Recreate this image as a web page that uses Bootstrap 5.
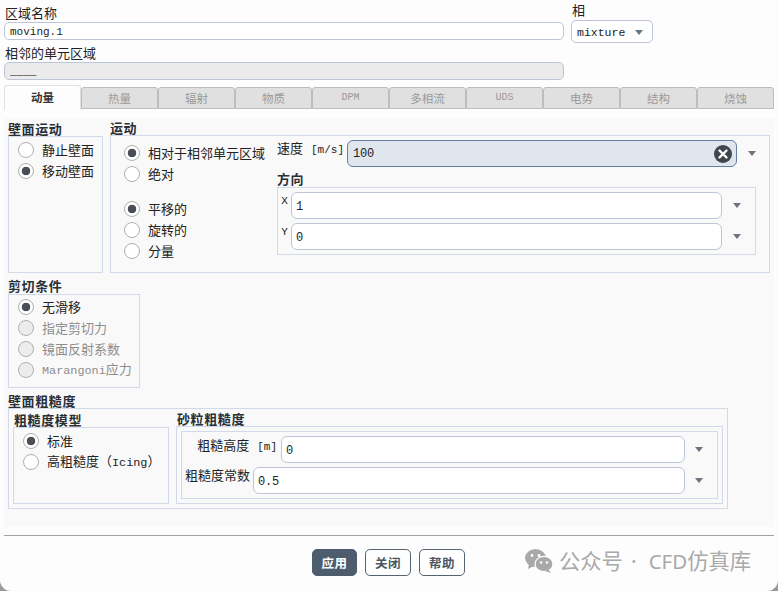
<!DOCTYPE html>
<html lang="zh"><head><meta charset="utf-8"><title>壁面</title>
<link href="https://cdn.jsdelivr.net/npm/bootstrap@5.3.0/dist/css/bootstrap.min.css" rel="stylesheet">
<style>
html{background:#9a9a9a;height:591px;overflow:hidden}
body{width:778px;height:591px;background:#fdfdfe;border-radius:0 0 11px 11px;overflow:hidden;position:relative;font:13px/15px "Noto Sans CJK SC",sans-serif;color:#222;padding:3px 4px 0}
.lt{font-family:"Liberation Mono",monospace;font-size:11.8px}
.top-l{width:560px}.top-r{width:82px;margin-left:7px}
.lbl{height:16px;line-height:13px;padding-left:1px}
.fld{display:block;width:100%;height:18px;border:1px solid #bcc6d6;border-radius:5px;background:#fff;padding:1px 5px 0;font:11px/16px "Liberation Mono",monospace;color:#222;outline:0}
.fld.off{background:#ebebeb;height:18px}
.sel{height:23px;border:1px solid #bcc6d6;border-radius:5px;background:#fff;padding:2px 9px 0 5px;font:11.5px/21px "Liberation Mono",monospace;margin-top:2px}
.tri{width:0;height:0;border:4.5px solid transparent;border-top:5px solid #6c7480;border-bottom:0;flex:none}
.tabbar{margin-top:5px;height:25px;border:0;flex-wrap:nowrap;align-items:flex-end}
.tabbar .nav-item{width:77px}
.tabbar .nav-link{height:22px;margin:0 0 1px;padding:0;text-align:center;background:#e0e0e0;border:1px solid #bdbdbd;border-radius:3px 3px 0 0;border-bottom-width:1px;color:#9a9a9a;font-size:11.5px;line-height:20px}
.tabbar .nav-link.lt{font-size:10px}
.tabbar .nav-link.active{height:25px;margin:0;background:#fdfdfe;border-bottom:0;color:#333;font-weight:700;line-height:22px}
.pane{margin-top:8px;height:409px;width:770px;background:#f9f9fa;padding:5px 4px 0}
.hd{font-weight:700;font-size:13px;line-height:11px;color:#2a2f36;letter-spacing:.6px;height:13px}
.grp{border:1px solid #d2d9e8}
.rad{display:flex;align-items:center;height:21px;gap:0}
.rad .form-check-input{width:16px;height:16px;margin:0 8px 0 0;flex:none;background-color:#fff;border:1px solid #b0b0b0;box-shadow:none;float:none}
.rad .form-check-input:checked{background-color:#fff;border-color:#b0b0b0;background-image:radial-gradient(circle,#4a4f57 0 4px,transparent 4.6px);background-size:auto}
.rad .form-check-input:disabled{background-color:#ececec;opacity:1}
.rad .form-check-input:checked:disabled{background-color:#ececec}
.rad.dim{color:#8d8d8d}
.rad .form-check-label{opacity:1!important;white-space:nowrap}
.col-wm{width:95px;height:137px;padding:2px 0 0 9px}.mot-box{width:660px;height:138px}
.mot-l{width:166px;padding:6px 0 0 13px;flex:none}
.mot-r{width:493px;flex:none}
.spd{margin-top:4px;height:27px;width:489px}
.spd-lbl{width:70px;flex:none;line-height:14px;margin-top:1px;white-space:nowrap}
.unit{margin-left:8px;font-size:11px}
.f-tall{height:27px;line-height:25px;border-radius:6px;padding:2px 8px 0 4px;flex:1 1 0;min-width:0;font-size:12px;letter-spacing:-.2px}
.f-act{background:#dfe6ee;border-color:#64809e;padding:0 4px 0 5px;display:flex;align-items:center;justify-content:space-between}
.f-act>span{padding-top:2px}
.clr{width:18px;height:18px;flex:none;display:block}
.trislot{width:30px;display:flex;justify-content:center;flex:none}
.spd .trislot{width:29px}
.trislot.nar{width:28px}
.dirbox{width:479px;height:68px;padding:4px 0 0 0}
.dirrow{height:27px}.dirrow+.dirrow{margin-top:4px}
.sp3{width:3px}
.axis{width:13px;text-align:center;flex:none;font:11px/14px "Liberation Mono",monospace;align-self:flex-start;margin-top:2px}
.shearbox{width:132px;height:94px;padding:1px 0 0 9px}
.roughbox{width:720px;height:101px;padding:5px 0 0 4px;gap:7px}
.rmodel{height:77px;padding:2px 0 0 9px}
.rgrit{height:78px}
.inbox{width:537px;height:68px;margin:4px 4px 0;padding:4px 4px 0 0}
.rl1{width:99px;flex:none;text-align:right;line-height:14px;margin-top:2px;padding-right:4px;white-space:nowrap}
.rl2{width:71px;flex:none;text-align:right;line-height:14px;margin-top:1px;padding-right:3px;white-space:nowrap}
.act{height:27px;width:46px;padding:0;font-weight:700;font-size:12.5px;line-height:25px;border-radius:5px;letter-spacing:.5px;--bs-btn-color:#4a5663;--bs-btn-border-color:#55626f;--bs-btn-bg:#fff;--bs-btn-hover-bg:#fff;--bs-btn-hover-color:#4a5663;--bs-btn-hover-border-color:#55626f}
.act.pri{width:45px;--bs-btn-color:#fff;--bs-btn-bg:#4e5d6e;--bs-btn-border-color:#4e5d6e;--bs-btn-hover-bg:#4e5d6e;--bs-btn-hover-color:#fff;--bs-btn-hover-border-color:#4e5d6e}
.rule{margin:8px 0 0;width:770px;border:0;border-top:1px solid #a2a2a2;opacity:1}
.actions{gap:8px;margin:13px 0 0 308px}
.wmark{position:absolute;left:525px;top:547px;display:flex;align-items:center;gap:6px;color:#a9a9a9;font:21.3px/26px "Noto Sans CJK SC",sans-serif;white-space:nowrap}
.wmark .cf{font-family:"Noto Sans",sans-serif;font-size:20.5px}
.wmark .dotc{font-family:"Noto Sans",sans-serif;margin:0 12px 0 8px}
.mt6{margin-top:6px}.mt7{margin-top:7px}.mt14{margin-top:14px}
</style></head><body>

<div class="d-flex">
  <div class="top-l">
    <div class="lbl" style="margin-top:3px">区域名称</div>
    <input class="fld" value="moving.1">
    <div class="lbl mt6">相邻的单元区域</div>
    <input class="fld off" value="____" disabled>
  </div>
  <div class="top-r">
    <div class="lbl" style="height:15px">相</div>
    <div class="sel d-flex align-items-center justify-content-between"><span>mixture</span><span class="tri"></span></div>
  </div>
</div>

<ul class="nav nav-tabs tabbar">
  <li class="nav-item"><a class="nav-link active" href="#">动量</a></li>
  <li class="nav-item"><a class="nav-link" href="#">热量</a></li>
  <li class="nav-item"><a class="nav-link" href="#">辐射</a></li>
  <li class="nav-item"><a class="nav-link" href="#">物质</a></li>
  <li class="nav-item"><a class="nav-link lt" href="#">DPM</a></li>
  <li class="nav-item"><a class="nav-link" href="#">多相流</a></li>
  <li class="nav-item"><a class="nav-link lt" href="#">UDS</a></li>
  <li class="nav-item"><a class="nav-link" href="#">电势</a></li>
  <li class="nav-item"><a class="nav-link" href="#">结构</a></li>
  <li class="nav-item"><a class="nav-link" href="#">烧蚀</a></li>
</ul>

<div class="pane">
  <div class="d-flex" style="gap:7px">
    <div>
      <div class="hd">壁面运动</div>
      <div class="grp col-wm">
        <div class="rad"><input class="form-check-input" type="radio" name="a" id="a1"><label class="form-check-label" for="a1">静止壁面</label></div>
        <div class="rad"><input class="form-check-input" type="radio" name="a" id="a2" checked><label class="form-check-label" for="a2">移动壁面</label></div>
      </div>
    </div>
    <div>
      <div class="hd" style="height:12px;line-height:10px">运动</div>
      <div class="grp mot-box d-flex">
        <div class="mot-l">
          <div class="rad"><input class="form-check-input" type="radio" name="b" id="b1" checked><label class="form-check-label" for="b1">相对于相邻单元区域</label></div>
          <div class="rad"><input class="form-check-input" type="radio" name="b" id="b2"><label class="form-check-label" for="b2">绝对</label></div>
          <div class="rad mt14"><input class="form-check-input" type="radio" name="c" id="c1" checked><label class="form-check-label" for="c1">平移的</label></div>
          <div class="rad"><input class="form-check-input" type="radio" name="c" id="c2"><label class="form-check-label" for="c2">旋转的</label></div>
          <div class="rad"><input class="form-check-input" type="radio" name="c" id="c3"><label class="form-check-label" for="c3">分量</label></div>
        </div>
        <div class="mot-r">
          <div class="d-flex spd">
            <div class="spd-lbl">速度<span class="lt unit">[m/s]</span></div>
            <div class="fld f-tall f-act"><span>100</span>
              <svg class="clr" viewBox="0 0 18 18"><circle cx="9" cy="9" r="9" fill="#41464d"/><path d="M5.5 5.5l7 7M12.5 5.5l-7 7" stroke="#fff" stroke-width="2.4" stroke-linecap="round"/></svg>
            </div>
            <div class="trislot align-items-center"><span class="tri"></span></div>
          </div>
          <div class="hd mt6" style="height:14px">方向</div>
          <div class="grp dirbox">
            <div class="d-flex align-items-center dirrow"><span class="axis">X</span><input class="fld f-tall" value="1"><span class="trislot"><span class="tri"></span></span><span class="sp3"></span></div>
            <div class="d-flex align-items-center dirrow"><span class="axis">Y</span><input class="fld f-tall" value="0"><span class="trislot"><span class="tri"></span></span><span class="sp3"></span></div>
          </div>
        </div>
      </div>
    </div>
  </div>

  <div class="hd mt7" style="height:14px">剪切条件</div>
  <div class="grp shearbox">
    <div class="rad"><input class="form-check-input" type="radio" name="d" id="d1" checked><label class="form-check-label" for="d1">无滑移</label></div>
    <div class="rad dim"><input class="form-check-input" type="radio" name="d" id="d2" disabled><label class="form-check-label" for="d2">指定剪切力</label></div>
    <div class="rad dim"><input class="form-check-input" type="radio" name="d" id="d3" disabled><label class="form-check-label" for="d3">镜面反射系数</label></div>
    <div class="rad dim"><input class="form-check-input" type="radio" name="d" id="d4" disabled><label class="form-check-label" for="d4"><span class="lt">Marangoni</span>应力</label></div>
  </div>

  <div class="hd mt6" style="height:14px;line-height:13px">壁面粗糙度</div>
  <div class="grp roughbox d-flex">
    <div style="width:156px">
      <div class="hd ps-1" style="padding-left:1px!important">粗糙度模型</div>
      <div class="grp rmodel">
        <div class="rad"><input class="form-check-input" type="radio" name="e" id="e1" checked><label class="form-check-label" for="e1">标准</label></div>
        <div class="rad"><input class="form-check-input" type="radio" name="e" id="e2"><label class="form-check-label" for="e2">高粗糙度（<span class="lt">Icing</span>）</label></div>
      </div>
    </div>
    <div style="width:547px">
      <div class="hd" style="height:12px;line-height:10px;padding-left:1px">砂粒粗糙度</div>
      <div class="grp rgrit">
        <div class="grp inbox">
          <div class="d-flex dirrow"><div class="rl1">粗糙高度<span class="lt unit">[m]</span></div><input class="fld f-tall" value="0"><span class="trislot nar align-items-center"><span class="tri"></span></span></div>
          <div class="d-flex dirrow"><div class="rl2">粗糙度常数</div><input class="fld f-tall" value="0.5"><span class="trislot nar align-items-center"><span class="tri"></span></span></div>
        </div>
      </div>
    </div>
  </div>
</div>

<hr class="rule">
<div class="d-flex actions">
  <button class="btn act pri" type="button">应用</button>
  <button class="btn act" type="button">关闭</button>
  <button class="btn act" type="button">帮助</button>
</div>

<div class="wmark">
  <svg width="28" height="24" viewBox="0 0 28 24"><ellipse cx="10.5" cy="9" rx="10.5" ry="9" fill="#a9a9a9"/><path d="M4 15l-1 5 6-3z" fill="#a9a9a9"/><circle cx="7" cy="6.5" r="1.4" fill="#fff"/><circle cx="14" cy="6.5" r="1.4" fill="#fff"/><ellipse cx="19" cy="15" rx="9" ry="7.6" fill="#a9a9a9" stroke="#fff" stroke-width="1.2"/><path d="M23 20l3 4-6-2z" fill="#a9a9a9"/><circle cx="16" cy="13.5" r="1.2" fill="#fff"/><circle cx="22" cy="13.5" r="1.2" fill="#fff"/></svg>
  <span>公众号<span class="dotc">·</span><span class="cf">CFD</span>仿真库</span>
</div>
</body></html>
